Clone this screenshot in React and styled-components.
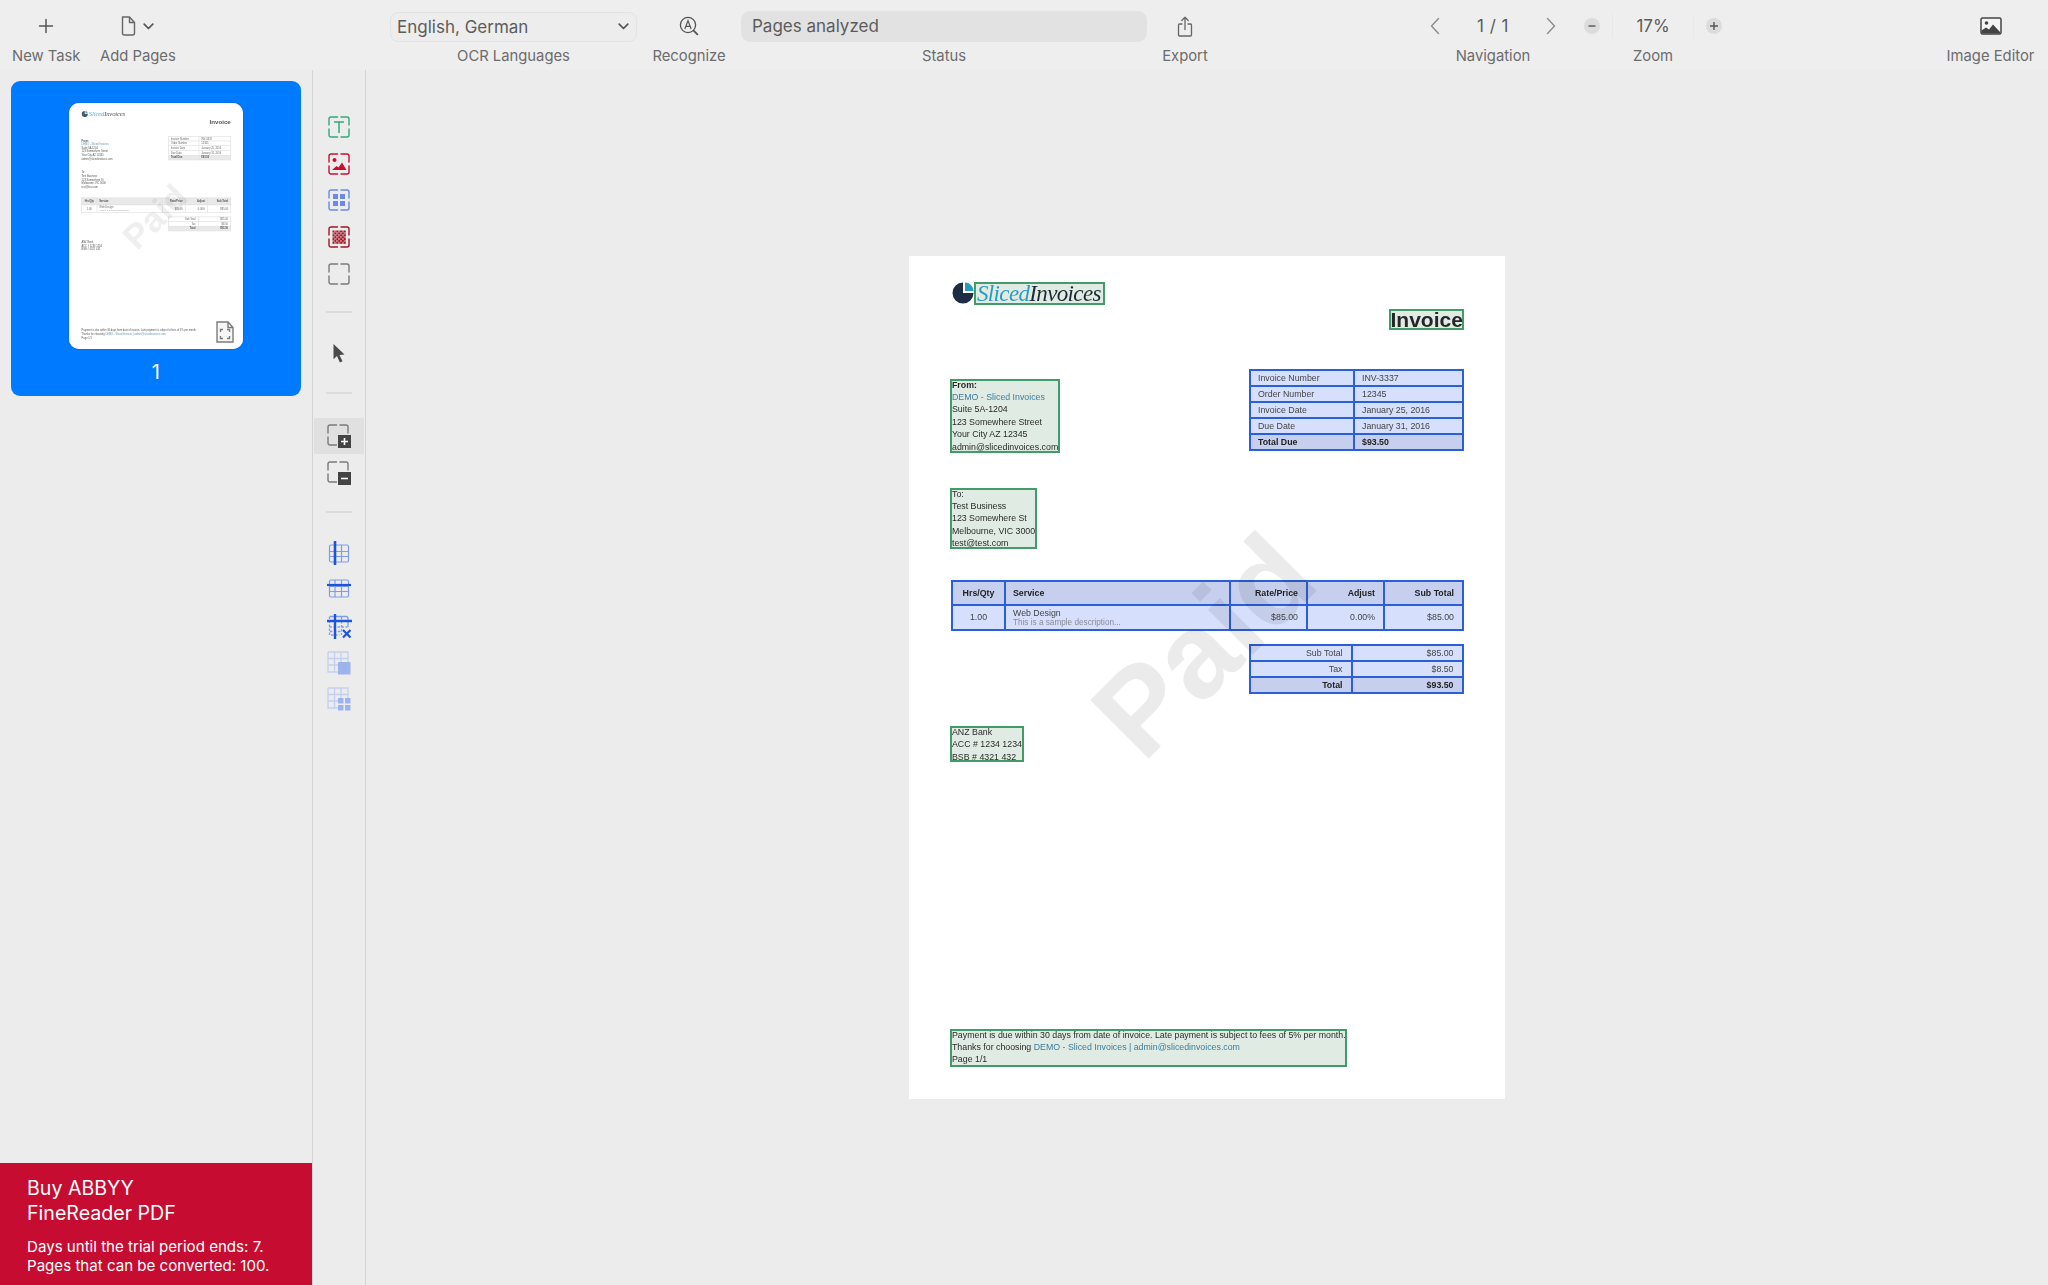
import React from "react";
import styled, { createGlobalStyle } from "styled-components";

const Global = createGlobalStyle`
  html, body { margin: 0; padding: 0; background: #ececec; }
  * { box-sizing: border-box; }
  body { font-family: Inter, "Liberation Sans", sans-serif; overflow: hidden; }
`;

const Shell = styled.div`
  width: 2048px; height: 1285px; display: flex; flex-direction: column; background: #ececec; overflow: hidden;
`;
const Toolbar = styled.header`
  height: 70px; flex: none; display: flex; align-items: flex-start; padding: 10.5px 0 0 12px; background: #eeeeee;
`;
const Group = styled.div`
  width: ${p => p.$w}px; margin-left: ${p => p.$ml || 0}px; flex: none; display: flex; flex-direction: column; align-items: stretch;
`;
const Control = styled.div`
  height: 31px; display: flex; align-items: center; justify-content: ${p => p.$justify || "center"}; gap: ${p => p.$gap || 0}px; padding: 0 ${p => p.$pad || 0}px;
`;
const Label = styled.div`
  margin-top: 6.5px; height: 17px; line-height: 17px; font-size: 14.8px; color: #6c6c6c; text-align: center; white-space: nowrap;
`;
const SelectBox = styled.div`
  height: 30px; margin-top: 1px; width: 100%; display: flex; align-items: center; justify-content: space-between; padding: 0 7px 0 6px;
  background: #ededed; border: 1px solid #e3e3e3; border-radius: 8px; font-size: 17px; color: #5c5c5c;
`;
const StatusBox = styled.div`
  height: 31px; width: 100%; display: flex; align-items: center; padding: 0 11px; background: #e2e2e2; border-radius: 9px; font-size: 17px; color: #5c5c5c;
`;
const PageNo = styled.span`
  font-size: 17px; color: #5c5c5c; letter-spacing: 0.5px;
`;
const ZoomDot = styled.span`
  width: 16px; height: 16px; border-radius: 50%; background: #dcdcdc; display: flex; align-items: center; justify-content: center;
`;
const ZoomValue = styled.span`
  width: 82px; height: 24px; line-height: 24px; text-align: center; font-size: 17px; color: #5c5c5c; border-left: 1px solid #e8e8e8; border-right: 1px solid #e8e8e8;
`;

const Body = styled.div`
  flex: 1; display: flex; min-height: 0;
`;
const Sidebar = styled.aside`
  width: 313px; flex: none; display: flex; flex-direction: column; border-right: 1px solid #d4d4d4; background: #ececec;
`;
const ThumbList = styled.div`
  flex: 1; padding: 11px 11.5px 0 11px;
`;
const ThumbCard = styled.div`
  height: 315px; background: #007aff; border-radius: 9px; display: flex; flex-direction: column; align-items: center; padding-top: 22px;
`;
const ThumbPage = styled.div`
  position: relative; width: 174px; height: 246px; border-radius: 10px; overflow: hidden; background: #fff; box-shadow: 0 0 2px rgba(0,0,0,.25);
`;
const ThumbScale = styled.div`
  width: 596px; height: 843px; transform: scale(0.292); transform-origin: 0 0; filter: blur(1.8px); opacity: 0.8;
`;
const ThumbBadge = styled.div`
  position: absolute; right: 9px; bottom: 6px; line-height: 0;
`;
const ThumbNumber = styled.div`
  margin-top: 11px; color: #fff; font-size: 20px; line-height: 24px;
`;
const Banner = styled.div`
  height: 122px; flex: none; background: #c60c30; color: #fff; padding: 12.5px 10px 0 27px;
`;
const BannerTitle = styled.div`
  font-size: 19.6px; line-height: 25.5px; white-space: nowrap;
`;
const BannerNote = styled.div`
  margin-top: 10px; font-size: 15.1px; line-height: 19px; white-space: nowrap;
`;

const Strip = styled.nav`
  width: 53px; flex: none; padding: 39px 1px 0 1px; border-right: 1px solid #d4d4d4; display: flex; flex-direction: column; align-items: stretch;
`;
const ToolBtn = styled.div`
  height: ${p => p.$h || 36.6}px; flex: none; display: flex; align-items: center; justify-content: center; background: ${p => p.$active ? "#e0e0e0" : "transparent"};
`;
const StripRule = styled.div`
  flex: none; height: 2px; width: 26px; align-self: center; background: #dcdcdc; margin: ${p => p.$t}px 0 ${p => p.$b}px;
`;

const Workspace = styled.main`
  flex: 1; display: flex; justify-content: center; align-items: center; background: #ececec; padding-bottom: 1px;
`;
const SoftPage = styled.div`
  filter: blur(0.3px);
`;

const Doc = styled.div`
  position: relative; width: 596px; height: 843px; flex: none; background: #fff; padding: 26px 41px 32px; display: flex; flex-direction: column;
  font-family: "Liberation Sans", Arial, sans-serif; font-size: 8.8px; color: #2a2a2a;
`;
const LogoRow = styled.div`
  display: flex; align-items: center; height: 23px; padding-left: 2px;
`;
const Zone = styled.div`
  width: ${p => p.$w}px; height: ${p => p.$h}px; margin-top: ${p => p.$mt || 0}px; flex: none; white-space: nowrap;
  padding: ${p => p.$pad ?? "0 0 0 2px"}; line-height: 12.45px;
  box-shadow: ${p => p.$marked ? "inset 0 0 0 2px #439b6a" : "none"};
  background: ${p => p.$marked ? "#e0ebe3" : "transparent"};
`;
const LogoText = styled.span`
  font-family: "Liberation Serif", serif; font-style: italic; font-size: 23px; line-height: 20px; display: block; letter-spacing: -0.65px; color: #1d2a35;
`;
const LogoTeal = styled.span`
  color: #2a9cc0;
`;
const InvoiceTitle = styled(Zone)`
  align-self: flex-end; font-weight: 700; font-size: 21px; line-height: 21px; color: #262626;
`;
const InfoRow = styled.div`
  display: flex; justify-content: space-between; align-items: flex-start; margin-top: 39px; height: 83px;
`;
const Bold = styled.div`
  font-weight: 700;
`;
const Link = styled.span`
  color: #3d7d9f;
`;
const Grid = styled.table`
  width: ${p => p.$w}px; flex: none; table-layout: fixed; border-collapse: collapse; margin: ${p => p.$m || "0"};
  border: 2px solid ${p => p.$marked ? "#2b5fd9" : "#d4d4d4"}; color: #3a3a3a;
  background: ${p => p.$marked ? "#d6e0fc" : "transparent"};
`;
const GridRow = styled.tr`
  height: ${p => p.$h}px; font-weight: ${p => p.$strong ? 700 : 400};
  background: ${p => p.$strong ? (p.$marked ? "#c6d0ee" : "#e4e4e4") : "transparent"};
  color: ${p => p.$strong ? "#222" : "#444"};
`;
const Cell = styled.td`
  border: 2px solid ${p => p.$marked ? "#2b5fd9" : "#d4d4d4"}; padding: 0 ${p => p.$right ? 8 : 7}px; text-align: ${p => p.$align || "left"}; white-space: nowrap; line-height: 10px;
`;
const SubNote = styled.div`
  color: #8a8a9a; font-size: 8.2px; line-height: 9px;
`;
const Spacer = styled.div`
  flex: 1;
`;
const Watermark = styled.div`
  position: absolute; left: 294px; top: 389px; transform: translate(-50%, -50%) rotate(-45deg);
  font-family: "Liberation Sans", sans-serif; font-weight: 700; font-size: 120px; line-height: 1; color: #ebebeb; mix-blend-mode: multiply; pointer-events: none;
`;

const Svg = ({ w = 22, h = 22, children, vb }) => (
  <svg width={w} height={h} viewBox={vb || `0 0 ${w} ${h}`} fill="none">{children}</svg>
);

const Corners = ({ c, sw = 1.4 }) => (
  <path stroke={c} strokeWidth={sw} strokeLinecap="round" fill="none"
    d="M1 9V3a2 2 0 0 1 2-2h6.5M13 1h6a2 2 0 0 1 2 2v6M21 13v6a2 2 0 0 1-2 2h-6M9.5 21H3a2 2 0 0 1-2-2v-6" />
);

const TextIcon = () => (
  <Svg><Corners c="#33a87c" /><path stroke="#33a87c" strokeWidth="1.5" d="M6 6h10M11 6v11" /></Svg>
);
const ImageIcon = () => (
  <Svg><Corners c="#c8102e" /><circle cx="6.5" cy="7" r="2" fill="#c8102e" /><path fill="#c8102e" d="M4 17l4.5-4 2 1.5L14 9.5l4.5 7.5z" /></Svg>
);
const BlocksIcon = () => (
  <Svg><Corners c="#6a8ae6" /><path fill="#6a8ae6" d="M5 5h5v5H5zM12 5h5v5h-5zM5 12h5v5H5zM12 12h5v5h-5z" /></Svg>
);
const BgIcon = () => {
  const dots = [];
  for (let y = 0; y < 7; y++) for (let x = 0; x < 7; x++) dots.push(
    <rect key={`${x}-${y}`} x={4.5 + x * 1.9} y={4.5 + y * 1.9} width="1.9" height="1.9" fill={(x + y) % 2 === 0 ? "#a01626" : "#c46a72"} />
  );
  return <Svg><Corners c="#a01626" />{dots}</Svg>;
};
const EmptyIcon = () => <Svg><Corners c="#7a7a7a" /></Svg>;
const CursorIcon = () => (
  <Svg w={14} h={20}><path fill="#4a4a4a" d="M1.5 1l11 10.5-5 .4 3 6.4-2.6 1.2-2.9-6.5-3.5 3.3z" /></Svg>
);
const AreaIcon = ({ minus }) => (
  <Svg w={24} h={24}>
    <path stroke="#7a7a7a" strokeWidth="1.4" strokeLinecap="round" d="M1 9V3a2 2 0 0 1 2-2h6.5M13 1h6a2 2 0 0 1 2 2v6M9.5 21H3a2 2 0 0 1-2-2v-6" />
    <rect x="11" y="11" width="13" height="13" fill="#444" />
    <path stroke="#fff" strokeWidth="1.6" d={minus ? "M14 17.5h7" : "M14 17.5h7M17.5 14v7"} />
  </Svg>
);
const GridLines = ({ c }) => (
  <path stroke={c} strokeWidth="1.2" d="M3 3h16a1.5 1.5 0 0 1 1.5 1.5v14a1.5 1.5 0 0 1-1.5 1.5H3a1.5 1.5 0 0 1-1.5-1.5v-14A1.5 1.5 0 0 1 3 3zM1.5 9.5h19M1.5 14.5h19M7 3v17M13.5 3v17" />
);
const ColIcon = () => (
  <Svg w={22} h={24}><g transform="translate(0 1)"><GridLines c="#7d9cea" /></g><path stroke="#1c54dc" strokeWidth="2.6" d="M7 0v24" /></Svg>
);
const RowIcon = () => (
  <Svg w={24} h={22}><g transform="translate(1 -1)"><GridLines c="#7d9cea" /></g><path stroke="#1c54dc" strokeWidth="2.2" d="M0 7h24" /></Svg>
);
const DeleteIcon = () => (
  <Svg w={25} h={25}>
    <path stroke="#7d9cea" strokeWidth="1.3" d="M3 2.5h16a2 2 0 0 1 2 2V13" />
    <path stroke="#7d9cea" strokeWidth="1.3" strokeDasharray="2.4 1.6" d="M2.5 2.5v18.5h10M2.5 13h18M14.5 3v18M3 17.5h11" />
    <path stroke="#1c54dc" strokeWidth="2.4" d="M8 0v25M0 7h25" />
    <path stroke="#1c54dc" strokeWidth="2.2" d="M16 16l7.5 7.5M23.5 16L16 23.5" />
  </Svg>
);
const MergeIcon = () => (
  <Svg w={24} h={24}>
    <path stroke="#c3cff0" strokeWidth="1.3" d="M1 1h20v10M1 1v20h10M1 7.5h20M1 14h10M7.5 1v20M14 1v10" />
    <rect x="11" y="11" width="12.5" height="12.5" fill="#9db3ee" />
  </Svg>
);
const SplitIcon = () => (
  <Svg w={24} h={24}>
    <path stroke="#c3cff0" strokeWidth="1.3" d="M1 1h20v10M1 1v20h10M1 7.5h20M1 14h10M7.5 1v20M14 1v10" />
    <path fill="#9db3ee" d="M11 11h5.5v5.5H11zM18 11h5.5v5.5H18zM11 18h5.5v5.5H11zM18 18h5.5v5.5H18z" />
  </Svg>
);

const Chevron = ({ dir }) => {
  if (dir === "down") return <Svg w={11} h={7}><path stroke="#555" strokeWidth="1.7" strokeLinecap="round" strokeLinejoin="round" d="M1.2 1.2L5.5 5.5 9.8 1.2" /></Svg>;
  if (dir === "left") return <Svg w={12} h={18}><path stroke="#8c8c8c" strokeWidth="1.4" strokeLinecap="round" strokeLinejoin="round" d="M9.5 1.5L2.5 9l7 7.5" /></Svg>;
  return <Svg w={12} h={18}><path stroke="#8c8c8c" strokeWidth="1.4" strokeLinecap="round" strokeLinejoin="round" d="M2.5 1.5l7 7.5-7 7.5" /></Svg>;
};

const Rows = ({ marked, widths, rows, m, w }) => (
  <Grid $w={w} $marked={marked} $m={m}>
    <colgroup>{widths.map((x, i) => <col key={i} style={{ width: x }} />)}</colgroup>
    <tbody>
      {rows.map((r, i) => (
        <GridRow key={i} $h={r.h} $strong={r.strong} $marked={marked}>
          {r.cells.map((c, j) => (
            <Cell key={j} $marked={marked} $align={r.align && r.align[j]} $right={r.align && r.align[j] === "right"}>{c}</Cell>
          ))}
        </GridRow>
      ))}
    </tbody>
  </Grid>
);

const InvoiceDoc = ({ marked }) => (
  <Doc>
    <LogoRow>
      <Svg w={22} h={22}>
        <path fill="#1d2d44" d="M11 0.5a10.5 10.5 0 1 0 10.5 10.5H11z" />
        <path fill="#2a9cc0" d="M13 0.5a8.5 8.5 0 0 1 8.5 8.5H13z" />
      </Svg>
      <Zone $w={131} $h={23} $marked={marked} $pad="2px 0 0 3px">
        <LogoText><LogoTeal>Sliced</LogoTeal>Invoices</LogoText>
      </Zone>
    </LogoRow>
    <InvoiceTitle $w={75} $h={21} $mt={4} $marked={marked} $pad="0 0 0 1.5px">Invoice</InvoiceTitle>
    <InfoRow>
      <Zone $w={110} $h={74} $mt={10} $marked={marked}>
        <Bold>From:</Bold>
        <Link>DEMO - Sliced Invoices</Link><br />
        Suite 5A-1204<br />
        123 Somewhere Street<br />
        Your City AZ 12345<br />
        admin@slicedinvoices.com
      </Zone>
      <Rows w={213} marked={marked} widths={[104, 109]} rows={[
        { h: 16.2, cells: ["Invoice Number", "INV-3337"] },
        { h: 16.2, cells: ["Order Number", "12345"] },
        { h: 16.2, cells: ["Invoice Date", "January 25, 2016"] },
        { h: 16.2, cells: ["Due Date", "January 31, 2016"] },
        { h: 16.2, strong: true, cells: ["Total Due", "$93.50"] },
      ]} />
    </InfoRow>
    <Zone $w={87} $h={61} $mt={36} $marked={marked}>
      To:<br />
      Test Business<br />
      123 Somewhere St<br />
      Melbourne, VIC 3000<br />
      test@test.com
    </Zone>
    <Rows w={511} m="31px 0 0 1px" marked={marked} widths={[53, 225, 77, 77, 79]} rows={[
      { h: 24, strong: true, align: ["center", "left", "right", "right", "right"], cells: ["Hrs/Qty", "Service", "Rate/Price", "Adjust", "Sub Total"] },
      { h: 25.5, align: ["center", "left", "right", "right", "right"], cells: ["1.00", <>Web Design<SubNote>This is a sample description...</SubNote></>, "$85.00", "0.00%", "$85.00"] },
    ]} />
    <Rows w={213} m="13px 0 0 298.5px" marked={marked} widths={[102, 111]} rows={[
      { h: 16, align: ["right", "right"], cells: ["Sub Total", "$85.00"] },
      { h: 16, align: ["right", "right"], cells: ["Tax", "$8.50"] },
      { h: 16, strong: true, align: ["right", "right"], cells: ["Total", "$93.50"] },
    ]} />
    <Zone $w={74} $h={36} $mt={32} $marked={marked}>
      ANZ Bank<br />
      ACC # 1234 1234<br />
      BSB # 4321 432
    </Zone>
    <Spacer />
    <Zone $w={397} $h={38} $marked={marked}>
      Payment is due within 30 days from date of invoice. Late payment is subject to fees of 5% per month.<br />
      Thanks for choosing <Link>DEMO - Sliced Invoices | admin@slicedinvoices.com</Link><br />
      Page 1/1
    </Zone>
    <Watermark>Paid</Watermark>
  </Doc>
);

export default function App() {
  return (
    <Shell>
      <Global />
      <Toolbar>
        <Group $w={68}>
          <Control><Svg w={16} h={16}><path stroke="#555" strokeWidth="1.5" strokeLinecap="round" d="M8 1.5v13M1.5 8h13" /></Svg></Control>
          <Label>New Task</Label>
        </Group>
        <Group $w={74} $ml={20}>
          <Control $gap={7}>
            <Svg w={16} h={20}><path stroke="#666" strokeWidth="1.4" strokeLinejoin="round" d="M2.5 1h7l5 5.5V17a2 2 0 0 1-2 2h-8a2 2 0 0 1-2-2zM9.5 1v5.5h5" /></Svg>
            <Chevron dir="down" />
          </Control>
          <Label>Add Pages</Label>
        </Group>
        <Group $w={247} $ml={216}>
          <Control><SelectBox>English, German<Chevron dir="down" /></SelectBox></Control>
          <Label>OCR Languages</Label>
        </Group>
        <Group $w={74} $ml={15}>
          <Control>
            <Svg w={20} h={20}>
              <circle cx="9" cy="9" r="7.6" stroke="#555" strokeWidth="1.3" />
              <path stroke="#555" strokeWidth="1.2" d="M5.8 13L9 4.6 12.2 13M6.8 10.3h4.4" />
              <path stroke="#555" strokeWidth="1.8" strokeLinecap="round" d="M14.6 14.6l3.8 3.8" />
            </Svg>
          </Control>
          <Label>Recognize</Label>
        </Group>
        <Group $w={406} $ml={15}>
          <Control><StatusBox>Pages analyzed</StatusBox></Control>
          <Label>Status</Label>
        </Group>
        <Group $w={46} $ml={15}>
          <Control>
            <Svg w={16} h={21}><path stroke="#666" strokeWidth="1.3" strokeLinejoin="round" strokeLinecap="round" d="M5 8H2.5a1 1 0 0 0-1 1v10a1 1 0 0 0 1 1h11a1 1 0 0 0 1-1V9a1 1 0 0 0-1-1H11M8 13.5V1.5M4.8 4.5L8 1.2l3.2 3.3" /></Svg>
          </Control>
          <Label>Export</Label>
        </Group>
        <Group $w={146} $ml={212}>
          <Control $justify="space-between" $pad={9}><Chevron dir="left" /><PageNo>1 / 1</PageNo><Chevron dir="right" /></Control>
          <Label>Navigation</Label>
        </Group>
        <Group $w={150} $ml={12}>
          <Control $justify="space-between" $pad={6}>
            <ZoomDot><Svg w={8} h={8}><path stroke="#555" strokeWidth="1.4" d="M0.5 4h7" /></Svg></ZoomDot>
            <ZoomValue>17%</ZoomValue>
            <ZoomDot><Svg w={10} h={10}><path stroke="#555" strokeWidth="1.4" d="M1 5h8M5 1v8" /></Svg></ZoomDot>
          </Control>
          <Label>Zoom</Label>
        </Group>
        <Group $w={91} $ml={217}>
          <Control>
            <Svg w={22} h={18}>
              <rect x="1" y="1" width="20" height="16" rx="1.6" stroke="#444" strokeWidth="1.5" fill="#f4f4f4" />
              <circle cx="6.5" cy="6" r="1.8" fill="#444" />
              <path fill="#444" d="M1.5 16.5v-3l4.5-3 3 2 4-5 7 7.5v1.5z" />
            </Svg>
          </Control>
          <Label>Image Editor</Label>
        </Group>
      </Toolbar>
      <Body>
        <Sidebar>
          <ThumbList>
            <ThumbCard>
              <ThumbPage>
                <ThumbScale><InvoiceDoc /></ThumbScale>
                <ThumbBadge>
                  <Svg w={18} h={22}>
                    <path stroke="#7c7c7c" strokeWidth="1.4" fill="#f6f6f6" d="M1 1h11l5 5.5V21H1zM12 1v5.5h5" />
                    <path stroke="#7c7c7c" strokeWidth="1.4" d="M4.5 11V8.5H7M11 8.5h2.5V11M13.5 15v2.5H11M7 17.5H4.5V15" />
                  </Svg>
                </ThumbBadge>
              </ThumbPage>
              <ThumbNumber>1</ThumbNumber>
            </ThumbCard>
          </ThumbList>
          <Banner>
            <BannerTitle>Buy ABBYY<br />FineReader PDF</BannerTitle>
            <BannerNote>Days until the trial period ends: 7.<br />Pages that can be converted: 100.</BannerNote>
          </Banner>
        </Sidebar>
        <Strip>
          <ToolBtn><TextIcon /></ToolBtn>
          <ToolBtn><ImageIcon /></ToolBtn>
          <ToolBtn><BlocksIcon /></ToolBtn>
          <ToolBtn><BgIcon /></ToolBtn>
          <ToolBtn><EmptyIcon /></ToolBtn>
          <StripRule $t={19} $b={22} />
          <ToolBtn><CursorIcon /></ToolBtn>
          <StripRule $t={20} $b={24} />
          <ToolBtn $active $h={36}><AreaIcon /></ToolBtn>
          <ToolBtn $h={38}><AreaIcon minus /></ToolBtn>
          <StripRule $t={19} $b={22} />
          <ToolBtn><ColIcon /></ToolBtn>
          <ToolBtn><RowIcon /></ToolBtn>
          <ToolBtn><DeleteIcon /></ToolBtn>
          <ToolBtn><MergeIcon /></ToolBtn>
          <ToolBtn><SplitIcon /></ToolBtn>
        </Strip>
        <Workspace><SoftPage><InvoiceDoc marked /></SoftPage></Workspace>
      </Body>
    </Shell>
  );
}
